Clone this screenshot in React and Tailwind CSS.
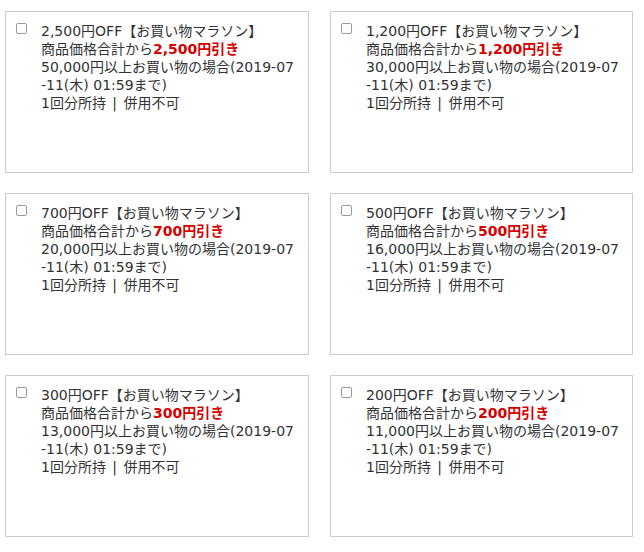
const coupons = [
    { off: "2,500", min: "50,000" },
    { off: "1,200", min: "30,000" },
    { off: "700", min: "20,000" },
    { off: "500", min: "16,000" },
    { off: "300", min: "13,000" },
    { off: "200", min: "11,000" },
];

const CouponCard = ({ coupon }) => {
    return (
        <label className="flex h-[162px] border border-[#cccccc] bg-white p-[10px] cursor-pointer">
            <input
                type="checkbox"
                className="appearance-none shrink-0 w-[11px] h-[11px] mt-[1px] mr-[14px] border border-[#9a9a9a] rounded-[2px] bg-white"
            />
            <div className="text-[14px] leading-[18px] text-[#333333]">
                <div>{coupon.off}円OFF【お買い物マラソン】</div>
                <div>
                    商品価格合計から
                    <span className="font-bold text-[#d50000]">{coupon.off}円引き</span>
                </div>
                <div>
                    {coupon.min}円以上お買い物の場合(2019-07
                    <br />
                    -11(木) 01:59まで)
                </div>
                <div>
                    1回分所持 <span className="mx-[2px]">|</span> 併用不可
                </div>
            </div>
        </label>
    );
};

export default function App() {
    return (
        <div
            className="min-h-[552px] bg-white pl-[5px] pt-[11px]"
            style={{ fontFamily: '"DejaVu Sans", "Noto Sans CJK JP", sans-serif' }}
        >
            <div className="grid grid-cols-[304px_303px] gap-x-[21px] gap-y-[20px]">
                {coupons.map((coupon) => (
                    <CouponCard key={coupon.off} coupon={coupon} />
                ))}
            </div>
        </div>
    );
}
